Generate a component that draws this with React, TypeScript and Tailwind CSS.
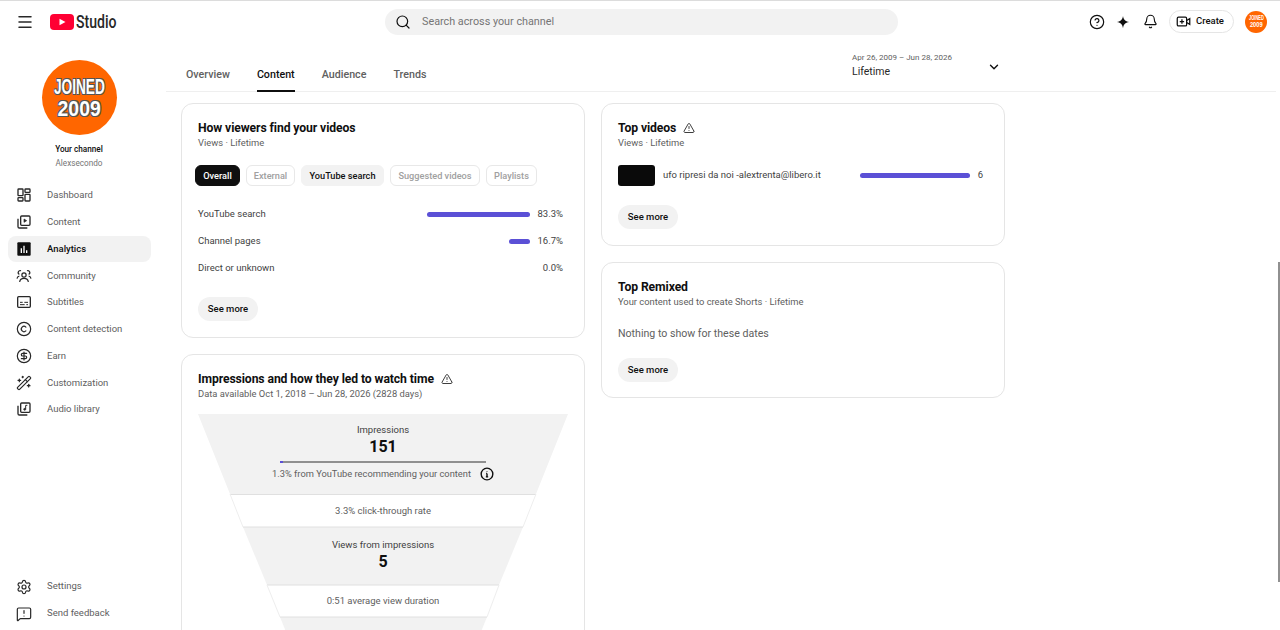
import React from 'react';
import { Search, Bell, CircleHelp, ChevronDown, TriangleAlert, Copyright, CircleDollarSign, WandSparkles, Settings, MessageSquareWarning, Menu } from 'lucide-react';

type IconProps = { className?: string };

const DashboardIcon = ({ className }: IconProps) => (
  <svg viewBox="0 0 24 24" className={className} fill="none" stroke="currentColor" strokeWidth="2">
    <rect x="3" y="3" width="7.5" height="10" rx="1" />
    <rect x="3" y="16" width="7.5" height="5" rx="1" />
    <rect x="13.5" y="3" width="7.5" height="5" rx="1" />
    <rect x="13.5" y="11" width="7.5" height="10" rx="1" />
  </svg>
);

const ContentIcon = ({ className }: IconProps) => (
  <svg viewBox="0 0 24 24" className={className} fill="none" stroke="currentColor" strokeWidth="2">
    <rect x="7" y="3" width="14" height="14" rx="1.5" />
    <path d="M3 7v12a2 2 0 0 0 2 2h12" />
    <path d="M12 7.5l4 2.5-4 2.5z" fill="currentColor" strokeWidth="1" />
  </svg>
);

const AnalyticsIcon = ({ className }: IconProps) => (
  <svg viewBox="0 0 24 24" className={className}>
    <rect x="2" y="2" width="20" height="20" rx="1.5" fill="#0f0f0f" />
    <path d="M7 11h2v7H7zM11 7h2v11h-2zM15 14h2v4h-2z" fill="#fff" />
  </svg>
);

const CommunityIcon = ({ className }: IconProps) => (
  <svg viewBox="0 0 24 24" className={className} fill="none" stroke="currentColor" strokeWidth="1.8">
    <circle cx="12" cy="10.5" r="3.2" />
    <path d="M5.5 21c.4-3.8 3-5.5 6.5-5.5s6.100 1.700 6.500 5.500" />
    <path d="M7.500 4.200A2.600 2.600 0 0 0 5 9.500M16.500 4.200A2.600 2.600 0 0 1 19 9.500" />
    <path d="M1.500 16c.3-2.400 1.500-3.500 3.500-3.800M22.500 16c-.3-2.400-1.500-3.500-3.500-3.800" />
  </svg>
);

const SubtitlesIcon = ({ className }: IconProps) => (
  <svg viewBox="0 0 24 24" className={className} fill="none" stroke="currentColor" strokeWidth="2">
    <rect x="2.500" y="4" width="19" height="16" rx="1.500" />
    <path d="M6 12.500h4M12.500 12.500H18M6 16h7M15.500 16H18" strokeWidth="1.500" />
  </svg>
);

const AudioIcon = ({ className }: IconProps) => (
  <svg viewBox="0 0 24 24" className={className} fill="none" stroke="currentColor" strokeWidth="2">
    <rect x="7" y="3" width="14" height="14" rx="1.500" />
    <path d="M3 7v12a2 2 0 0 0 2 2h12" />
    <circle cx="13" cy="12.500" r="1.500" fill="currentColor" strokeWidth="1" />
    <path d="M14.500 12.500V6.500H17" strokeWidth="1.500" />
  </svg>
);

const SparkleIcon = ({ className }: IconProps) => (
  <svg viewBox="0 0 24 24" className={className} fill="currentColor">
    <path d="M12 1.500c.9 6 3.600 9.300 10.500 10.500-6.900 1.200-9.600 4.500-10.500 10.500-.9-6-3.600-9.300-10.500-10.500C8.400 10.800 11.100 7.500 12 1.500z" />
  </svg>
);

const CreateIcon = ({ className }: IconProps) => (
  <svg viewBox="0 0 24 24" className={className} fill="none" stroke="currentColor" strokeWidth="2">
    <rect x="2" y="5" width="15" height="14" rx="2" />
    <path d="M17 10.500l5-3v9l-5-3" />
    <path d="M9.500 8.500v7M6 12h7" />
  </svg>
);

const navItems = [
  { label: 'Dashboard', Icon: DashboardIcon },
  { label: 'Content', Icon: ContentIcon },
  { label: 'Analytics', Icon: AnalyticsIcon, active: true },
  { label: 'Community', Icon: CommunityIcon },
  { label: 'Subtitles', Icon: SubtitlesIcon },
  { label: 'Content detection', Icon: Copyright },
  { label: 'Earn', Icon: CircleDollarSign },
  { label: 'Customization', Icon: WandSparkles },
  { label: 'Audio library', Icon: AudioIcon },
];

const bottomItems = [
  { label: 'Settings', Icon: Settings },
  { label: 'Send feedback', Icon: MessageSquareWarning },
];

const chips = [
  { label: 'Overall', cls: 'w-[45px] bg-[#0f0f0f] text-white border-[#0f0f0f]' },
  { label: 'External', cls: 'w-[49px] border-[#e8e8e8] text-[#a0a0a0]' },
  { label: 'YouTube search', cls: 'w-[83px] bg-[#f2f2f2] border-[#f2f2f2] text-[#0f0f0f]' },
  { label: 'Suggested videos', cls: 'w-[90px] border-[#e8e8e8] text-[#a0a0a0]' },
  { label: 'Playlists', cls: 'w-[51px] border-[#e8e8e8] text-[#a0a0a0]' },
];

const sources = [
  { label: 'YouTube search', bar: 'w-[103px]', value: '83.3%' },
  { label: 'Channel pages', bar: 'w-[21px]', value: '16.7%' },
  { label: 'Direct or unknown', bar: 'w-0', value: '0.0%' },
];

const SeeMore = () => (
  <button type="button" className="h-6 w-[60px] rounded-full bg-[#f2f2f2] text-[9.5px] font-medium text-[#0f0f0f]">
    See more
  </button>
);

const Card = ({ children }: { children: React.ReactNode }) => (
  <div className="rounded-xl border border-[#e5e5e5] bg-white px-4 pt-[16px]">{children}</div>
);

const Title = ({ text, warn }: { text: string; warn?: boolean }) => (
  <div className="flex h-4 items-center gap-[7px] text-[12.2px] leading-4 font-bold tracking-[-0.1px] text-[#0f0f0f]">
    {text}
    {warn && <TriangleAlert className="h-3 w-3 text-[#282828]" strokeWidth={1.8} />}
  </div>
);

const Sub = ({ text }: { text: string }) => <div className="h-[14px] text-[9.4px] leading-[14px] text-[#606060]">{text}</div>;

const Avatar = ({ big }: { big?: boolean }) => (
  <div
    className={
      big
        ? 'flex h-[75px] w-[75px] flex-col items-center justify-center rounded-full bg-[#ff6600] text-[19px] leading-[22px] font-bold text-white [text-shadow:1px_1px_0_#555,-1px_-1px_0_#555,1px_-1px_0_#555,-1px_1px_0_#555]'
        : 'ml-[11px] flex h-[22px] w-[22px] flex-col items-center justify-center rounded-full bg-[#ff6600] text-[5.6px] leading-[6.5px] font-bold text-white'
    }
    style={{ fontFamily: '"Liberation Sans", sans-serif' }}
  >
    <span className="inline-block scale-x-[0.72] scale-y-[1.15] whitespace-nowrap">JOINED</span>
    <span className="inline-block scale-x-[1.02] scale-y-[1.15] whitespace-nowrap">2009</span>
  </div>
);

export default function App() {
  return (
    <div className="relative flex h-[630px] w-[1280px] flex-col overflow-hidden border-t border-[#dcdcdc] bg-white" style={{ fontFamily: 'Roboto, sans-serif' }}>
      {/* Header */}
      <header className="flex h-[41px] shrink-0 items-center">
        <Menu className="ml-[16px] h-[18px] w-[18px] text-[#282828]" strokeWidth={2} />
        <div className="ml-[16px] flex items-center">
          <svg viewBox="0 0 24 16" className="h-[16px] w-[24px]">
            <rect x="0" y="0" width="24" height="16" rx="4" fill="#ff0033" />
            <path d="M9.500 4.800L15.500 8l-6 3.200z" fill="#fff" />
          </svg>
          <span className="ml-[2px] inline-block w-[39px] origin-left scale-x-[0.74] text-[19px] leading-none font-medium whitespace-nowrap text-[#282828]">Studio</span>
        </div>
        <div className="mt-[1px] ml-[270px] flex h-[26px] w-[513px] items-center rounded-full bg-[#f2f2f2] pl-[10px]">
          <Search className="h-4 w-4 text-[#0f0f0f]" strokeWidth={1.8} />
          <span className="ml-[11px] text-[10.800px] text-[#757575]">Search across your channel</span>
        </div>
        <div className="ml-[191px] flex items-center">
          <CircleHelp className="h-4 w-4 text-[#0f0f0f]" strokeWidth={1.8} />
          <SparkleIcon className="ml-[11px] h-[14px] w-[14px] text-[#0f0f0f]" />
          <Bell className="ml-[13px] h-[15px] w-[15px] text-[#0f0f0f]" strokeWidth={1.8} />
          <div className="ml-[11px] flex h-[23px] w-[65px] items-center rounded-full border border-[#e5e5e5] pl-[6px]">
            <CreateIcon className="h-[15px] w-[15px] text-[#0f0f0f]" />
            <span className="ml-[5px] text-[9.5px] font-medium text-[#0f0f0f]">Create</span>
          </div>
          <Avatar />
        </div>
      </header>

      <div className="flex min-h-0 flex-1">
        {/* Sidebar */}
        <aside className="flex w-[166px] shrink-0 flex-col pt-[18px] pb-[3px]">
          <div className="flex flex-col items-center pr-[8px]">
            <Avatar big />
            <div className="mt-[8px] text-[8.2px] leading-[12px] font-medium text-[#0f0f0f]">Your channel</div>
            <div className="mt-[2px] text-[8.2px] leading-[12px] text-[#757575]">Alexsecondo</div>
          </div>
          <nav className="mt-[13px] flex flex-col">
            {navItems.map(({ label, Icon, active }) => (
              <div key={label} className={`ml-[8px] flex h-[26.75px] w-[143px] items-center rounded-lg pl-[8px] ${active ? 'bg-[#f2f2f2]' : ''}`}>
                <Icon className="h-[16px] w-[16px] text-[#282828]" strokeWidth={1.8} />
                <span className={`ml-[15px] text-[9.5px] ${active ? 'font-medium text-[#0f0f0f]' : 'text-[#606060]'}`}>{label}</span>
              </div>
            ))}
          </nav>
          <div className="mt-auto flex flex-col">
            {bottomItems.map(({ label, Icon }) => (
              <div key={label} className="ml-[8px] flex h-[27px] w-[143px] items-center pl-[8px]">
                <Icon className="h-[16px] w-[16px] text-[#282828]" strokeWidth={1.8} />
                <span className="ml-[15px] text-[9.5px] text-[#606060]">{label}</span>
              </div>
            ))}
          </div>
        </aside>

        {/* Main */}
        <main className="min-w-0 flex-1">
          <div className="flex h-[50px] w-[1110px] items-stretch justify-between border-b border-[#efefef] pr-[275px] pl-[20px]">
            <div className="flex gap-[27px] pt-[25px] text-[10.700px] font-medium text-[#606060]">
              <span>Overview</span>
              <span className="h-[25px] border-b-2 border-[#0f0f0f] text-[#0f0f0f]">Content</span>
              <span>Audience</span>
              <span>Trends</span>
            </div>
            <div className="flex w-[150px] justify-between pt-[10px]">
              <div className="pl-[1px]">
                <div className="text-[8px] leading-[12px] text-[#606060]">Apr 26, 2009 – Jun 28, 2026</div>
                <div className="mt-[1px] text-[10.5px] leading-[13px] text-[#282828]">Lifetime</div>
              </div>
              <ChevronDown className="mt-[8px] h-[14px] w-[14px] text-[#0f0f0f]" strokeWidth={2.4} />
            </div>
          </div>

          <div className="mt-[11px] ml-[15px] grid w-[824px] grid-cols-2 items-start gap-x-[16px]">
            <div className="flex flex-col gap-[16px]">
              <Card>
                <Title text="How viewers find your videos" />
                <Sub text="Views · Lifetime" />
                <div className="-ml-[3px] mt-[15px] flex gap-[6px]">
                  {chips.map(c => (
                    <span key={c.label} className={`flex h-[21px] items-center justify-center rounded-md border text-[9.2px] font-medium ${c.cls}`}>
                      {c.label}
                    </span>
                  ))}
                </div>
                <div className="mt-[15px] flex flex-col pr-[5px]">
                  {sources.map(s => (
                    <div key={s.label} className="flex h-[26.7px] items-center text-[9.5px] text-[#3f3f3f]">
                      <span className="flex-1">{s.label}</span>
                      <span className={`h-[5px] rounded-full bg-[#5b50d6] ${s.bar}`} />
                      <span className="w-[33px] text-right">{s.value}</span>
                    </div>
                  ))}
                </div>
                <div className="mt-[14px] mb-[16px]">
                  <SeeMore />
                </div>
              </Card>

              <Card>
                <Title text="Impressions and how they led to watch time" warn />
                <Sub text="Data available Oct 1, 2018 – Jun 28, 2026 (2828 days)" />
                <div className="relative mt-[13px] h-[300px] w-[370px]">
                  {/* funnel backdrop */}
                  <svg viewBox="0 0 370 300" className="absolute inset-0 h-[300px] w-[370px]">
                    <path d="M0 0H370L338 80H32z" fill="#f2f2f2" />
                    <path d="M45 113H325L301 171H69z" fill="#f2f2f2" />
                    <path d="M82 203H289L265 262H106z" fill="#f2f2f2" />
                    <path d="M32 80.500H338M45 113H325M69 171H301M82 203H289" stroke="#e0e0e0" strokeWidth="1" />
                    <path d="M32 80L45 113M338 80L325 113M69 171L82 203M301 171L289 203" stroke="#eeeeee" strokeWidth="1" />
                  </svg>
                  <div className="relative flex flex-col items-center text-center">
                    <div className="h-[80px] pt-[9px]">
                      <div className="text-[9.5px] leading-[13px] text-[#3f3f3f]">Impressions</div>
                      <div className="text-[16px] leading-[22px] font-bold text-[#0f0f0f]">151</div>
                      <div className="mx-auto mt-[3px] h-[2px] w-[206px] bg-[#909090]">
                        <div className="h-[2px] w-[3px] bg-[#5b50d6]" />
                      </div>
                      <div className="-mx-[12px] mt-[4px] flex items-center justify-center gap-[9px] text-[9.3px] leading-[12px] whitespace-nowrap text-[#606060]">
                        1.3% from YouTube recommending your content
                        <svg viewBox="0 0 24 24" className="h-[14px] w-[14px] shrink-0 text-[#0f0f0f]" fill="none" stroke="currentColor" strokeWidth="2.400">
                          <circle cx="12" cy="12" r="10" />
                          <path d="M12 11v6M10 17h4M10.500 11H12M12 7v.5" />
                        </svg>
                      </div>
                    </div>
                    <div className="flex h-[33px] items-center text-[9.5px] text-[#606060]">3.3% click-through rate</div>
                    <div className="h-[58px] pt-[11px]">
                      <div className="text-[9.5px] leading-[13px] text-[#3f3f3f]">Views from impressions</div>
                      <div className="text-[16px] leading-[22px] font-bold text-[#0f0f0f]">5</div>
                    </div>
                    <div className="flex h-[32px] items-center text-[9.5px] text-[#606060]">0:51 average view duration</div>
                  </div>
                </div>
              </Card>
            </div>

            <div className="flex flex-col gap-[16px]">
              <Card>
                <Title text="Top videos" warn />
                <Sub text="Views · Lifetime" />
                <div className="mt-[15px] flex h-[21px] items-center pr-[5px] text-[9.5px] text-[#3f3f3f]">
                  <div className="h-[21px] w-[37px] rounded-[3px] bg-[#0a0a0a]" />
                  <span className="ml-[8px] flex-1">ufo ripresi da noi -alextrenta@libero.it</span>
                  <span className="h-[5px] w-[110px] rounded-full bg-[#5b50d6]" />
                  <span className="w-[13px] text-right">6</span>
                </div>
                <div className="mt-[17px] mb-[16px]">
                  <SeeMore />
                </div>
              </Card>

              <Card>
                <Title text="Top Remixed" />
                <Sub text="Your content used to create Shorts · Lifetime" />
                <div className="mt-[17px] h-[16px] text-[10.600px] leading-[16px] text-[#606060]">Nothing to show for these dates</div>
                <div className="mt-[14px] mb-[15px]">
                  <SeeMore />
                </div>
              </Card>
            </div>
          </div>
        </main>
      </div>

      {/* Scrollbar */}
      <div className="absolute top-[261px] right-0 h-[320px] w-[2px] bg-[#909090]" />
    </div>
  );
}
